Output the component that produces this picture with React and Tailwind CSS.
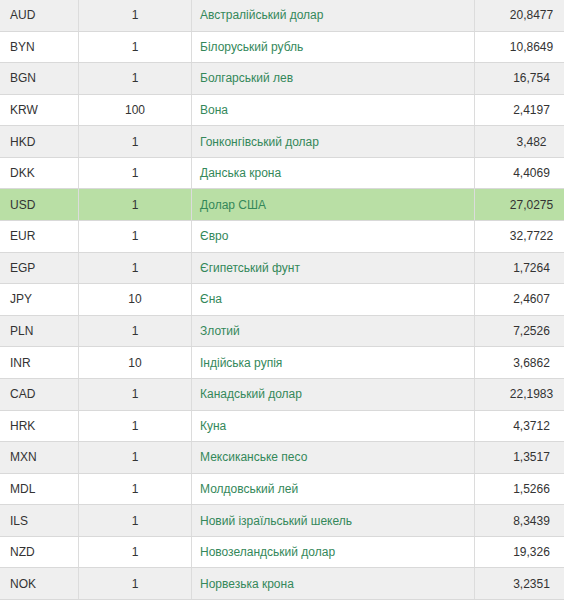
import React from "react";

const rows = [
  ["AUD", "1", "Австралійський долар", "20,8477"],
  ["BYN", "1", "Білоруський рубль", "10,8649"],
  ["BGN", "1", "Болгарський лев", "16,754"],
  ["KRW", "100", "Вона", "2,4197"],
  ["HKD", "1", "Гонконгівський долар", "3,482"],
  ["DKK", "1", "Данська крона", "4,4069"],
  ["USD", "1", "Долар США", "27,0275"],
  ["EUR", "1", "Євро", "32,7722"],
  ["EGP", "1", "Єгипетський фунт", "1,7264"],
  ["JPY", "10", "Єна", "2,4607"],
  ["PLN", "1", "Злотий", "7,2526"],
  ["INR", "10", "Індійська рупія", "3,6862"],
  ["CAD", "1", "Канадський долар", "22,1983"],
  ["HRK", "1", "Куна", "4,3712"],
  ["MXN", "1", "Мексиканське песо", "1,3517"],
  ["MDL", "1", "Молдовський лей", "1,5266"],
  ["ILS", "1", "Новий ізраїльський шекель", "8,3439"],
  ["NZD", "1", "Новозеландський долар", "19,326"],
  ["NOK", "1", "Норвезька крона", "3,2351"],
];

export default function App() {
  return (
    <div className="w-[564px] h-[600px] overflow-hidden bg-white">
      <div
        className="w-[588px] flex flex-col text-[12px] text-[#333]"
        style={{ fontFamily: '"Liberation Sans", Arial, sans-serif' }}
      >
        {rows.map((r, i) => {
          const bg =
            r[0] === "USD" ? "bg-[#b9dfa5]" : i % 2 === 0 ? "bg-[#efefef]" : "bg-white";
          return (
            <div
              key={r[0]}
              className={`flex h-[31.58px] border-b border-[#d9d9d9] ${bg}`}
            >
              <div className="w-[79px] flex items-center pl-[10px] border-r border-[#dcdcdc]">
                {r[0]}
              </div>
              <div className="w-[113px] flex items-center justify-center border-r border-[#dcdcdc]">
                {r[1]}
              </div>
              <div className="w-[283px] flex items-center pl-[8px] text-[#34885a] border-r border-[#dcdcdc]">
                {r[2]}
              </div>
              <div className="w-[113px] flex items-center justify-center">
                {r[3]}
              </div>
            </div>
          );
        })}
      </div>
    </div>
  );
}
